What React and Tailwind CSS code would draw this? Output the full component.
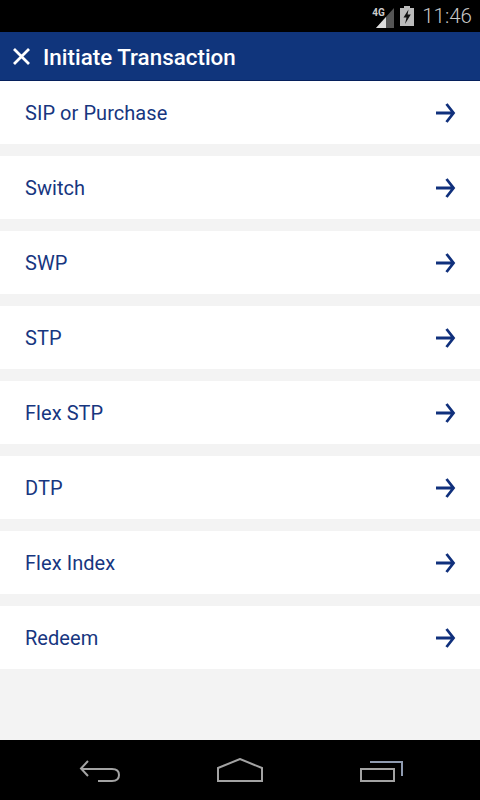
import React from 'react';

const items = ['SIP or Purchase', 'Switch', 'SWP', 'STP', 'Flex STP', 'DTP', 'Flex Index', 'Redeem'];

const StatusBar = () => (
  <div className="h-[32px] bg-black flex items-center justify-end">
    <div className="relative w-[24px] h-[26px] mr-[5px]">
      <svg width="24" height="26" viewBox="0 0 24 26" className="absolute left-0 top-0">
        <polygon points="23,5 23,25 5,25" fill="#555" />
        <polygon points="15,14 15,25 5,25" fill="#ddd" />
      </svg>
      <span className="absolute left-[1px] top-[3px] text-[10px] leading-[14px] font-bold text-[#ccc] font-['Roboto',sans-serif]">4G</span>
    </div>
    <svg width="14" height="20" viewBox="0 0 14 20" className="mr-[8px] mt-[-1px]">
      <rect x="4" y="0" width="6" height="2" fill="#bbb" />
      <rect x="0" y="2" width="14" height="18" fill="#bbb" />
      <polygon points="8.5,3.5 3.5,11.5 6.5,11.5 5,18 10.8,8.5 7.6,8.5" fill="#111" />
    </svg>
    <span className="text-[#c8c8c8] text-[20.5px] leading-[32px] mr-[8px] font-['Roboto',sans-serif] font-light">11:46</span>
  </div>
);

const Header = () => (
  <div className="h-[49px] bg-[#10357c] border-b border-[#06205c] flex items-center">
    <svg width="20" height="20" viewBox="0 0 20 20" className="ml-[11px] mr-[12px]">
      <path d="M3 3 L18 18 M18 3 L3 18" stroke="white" strokeWidth="2.8" fill="none" />
    </svg>
    <span className="text-white text-[22.4px] font-medium font-['Roboto',sans-serif] leading-none mt-[3px]">Initiate Transaction</span>
  </div>
);

const Row = ({ label }) => (
  <div className="h-[63px] bg-white flex items-center justify-between pl-[25px] pr-[24px]">
    <span className="text-[#17367f] text-[20px] font-['Roboto',sans-serif] leading-none tracking-[0.05px]">{label}</span>
    <svg width="20" height="20" viewBox="0 0 20 20">
      <path d="M0 10 H17 M10.5 1 L17.5 10 L10.5 19" stroke="#10307c" strokeWidth="2.8" fill="none" />
    </svg>
  </div>
);

const NavBar = () => (
  <div className="h-[60px] bg-black flex items-center justify-between pl-[79px] pr-[76px]">
    <svg width="42" height="24" viewBox="0 0 42 24">
      <path d="M9 3 L2 10.5 L9 18 M2 11 H33 Q40 11 40 17 Q40 23 33 23 H19" stroke="#a3a3a3" strokeWidth="2" fill="none" />
    </svg>
    <svg width="46" height="24" viewBox="0 0 46 24" className="ml-[-2px]">
      <path d="M1 23 V10 L23 1 L45 10 V23 Z" stroke="#a3a3a3" strokeWidth="2" fill="none" />
    </svg>
    <svg width="44" height="24" viewBox="0 0 44 24">
      <path d="M10 4 H42 V18" stroke="#8f9bb0" strokeWidth="2" fill="none" />
      <rect x="1" y="11" width="33" height="12" stroke="#a3a3a3" strokeWidth="2" fill="none" />
    </svg>
  </div>
);

export default function App() {
  return (
    <div className="w-[480px] h-[800px] flex flex-col bg-[#f3f3f3] overflow-hidden">
      <StatusBar />
      <Header />
      <div className="flex-1 flex flex-col gap-[12px]">
        {items.map((item) => (
          <Row key={item} label={item} />
        ))}
      </div>
      <NavBar />
    </div>
  );
}
